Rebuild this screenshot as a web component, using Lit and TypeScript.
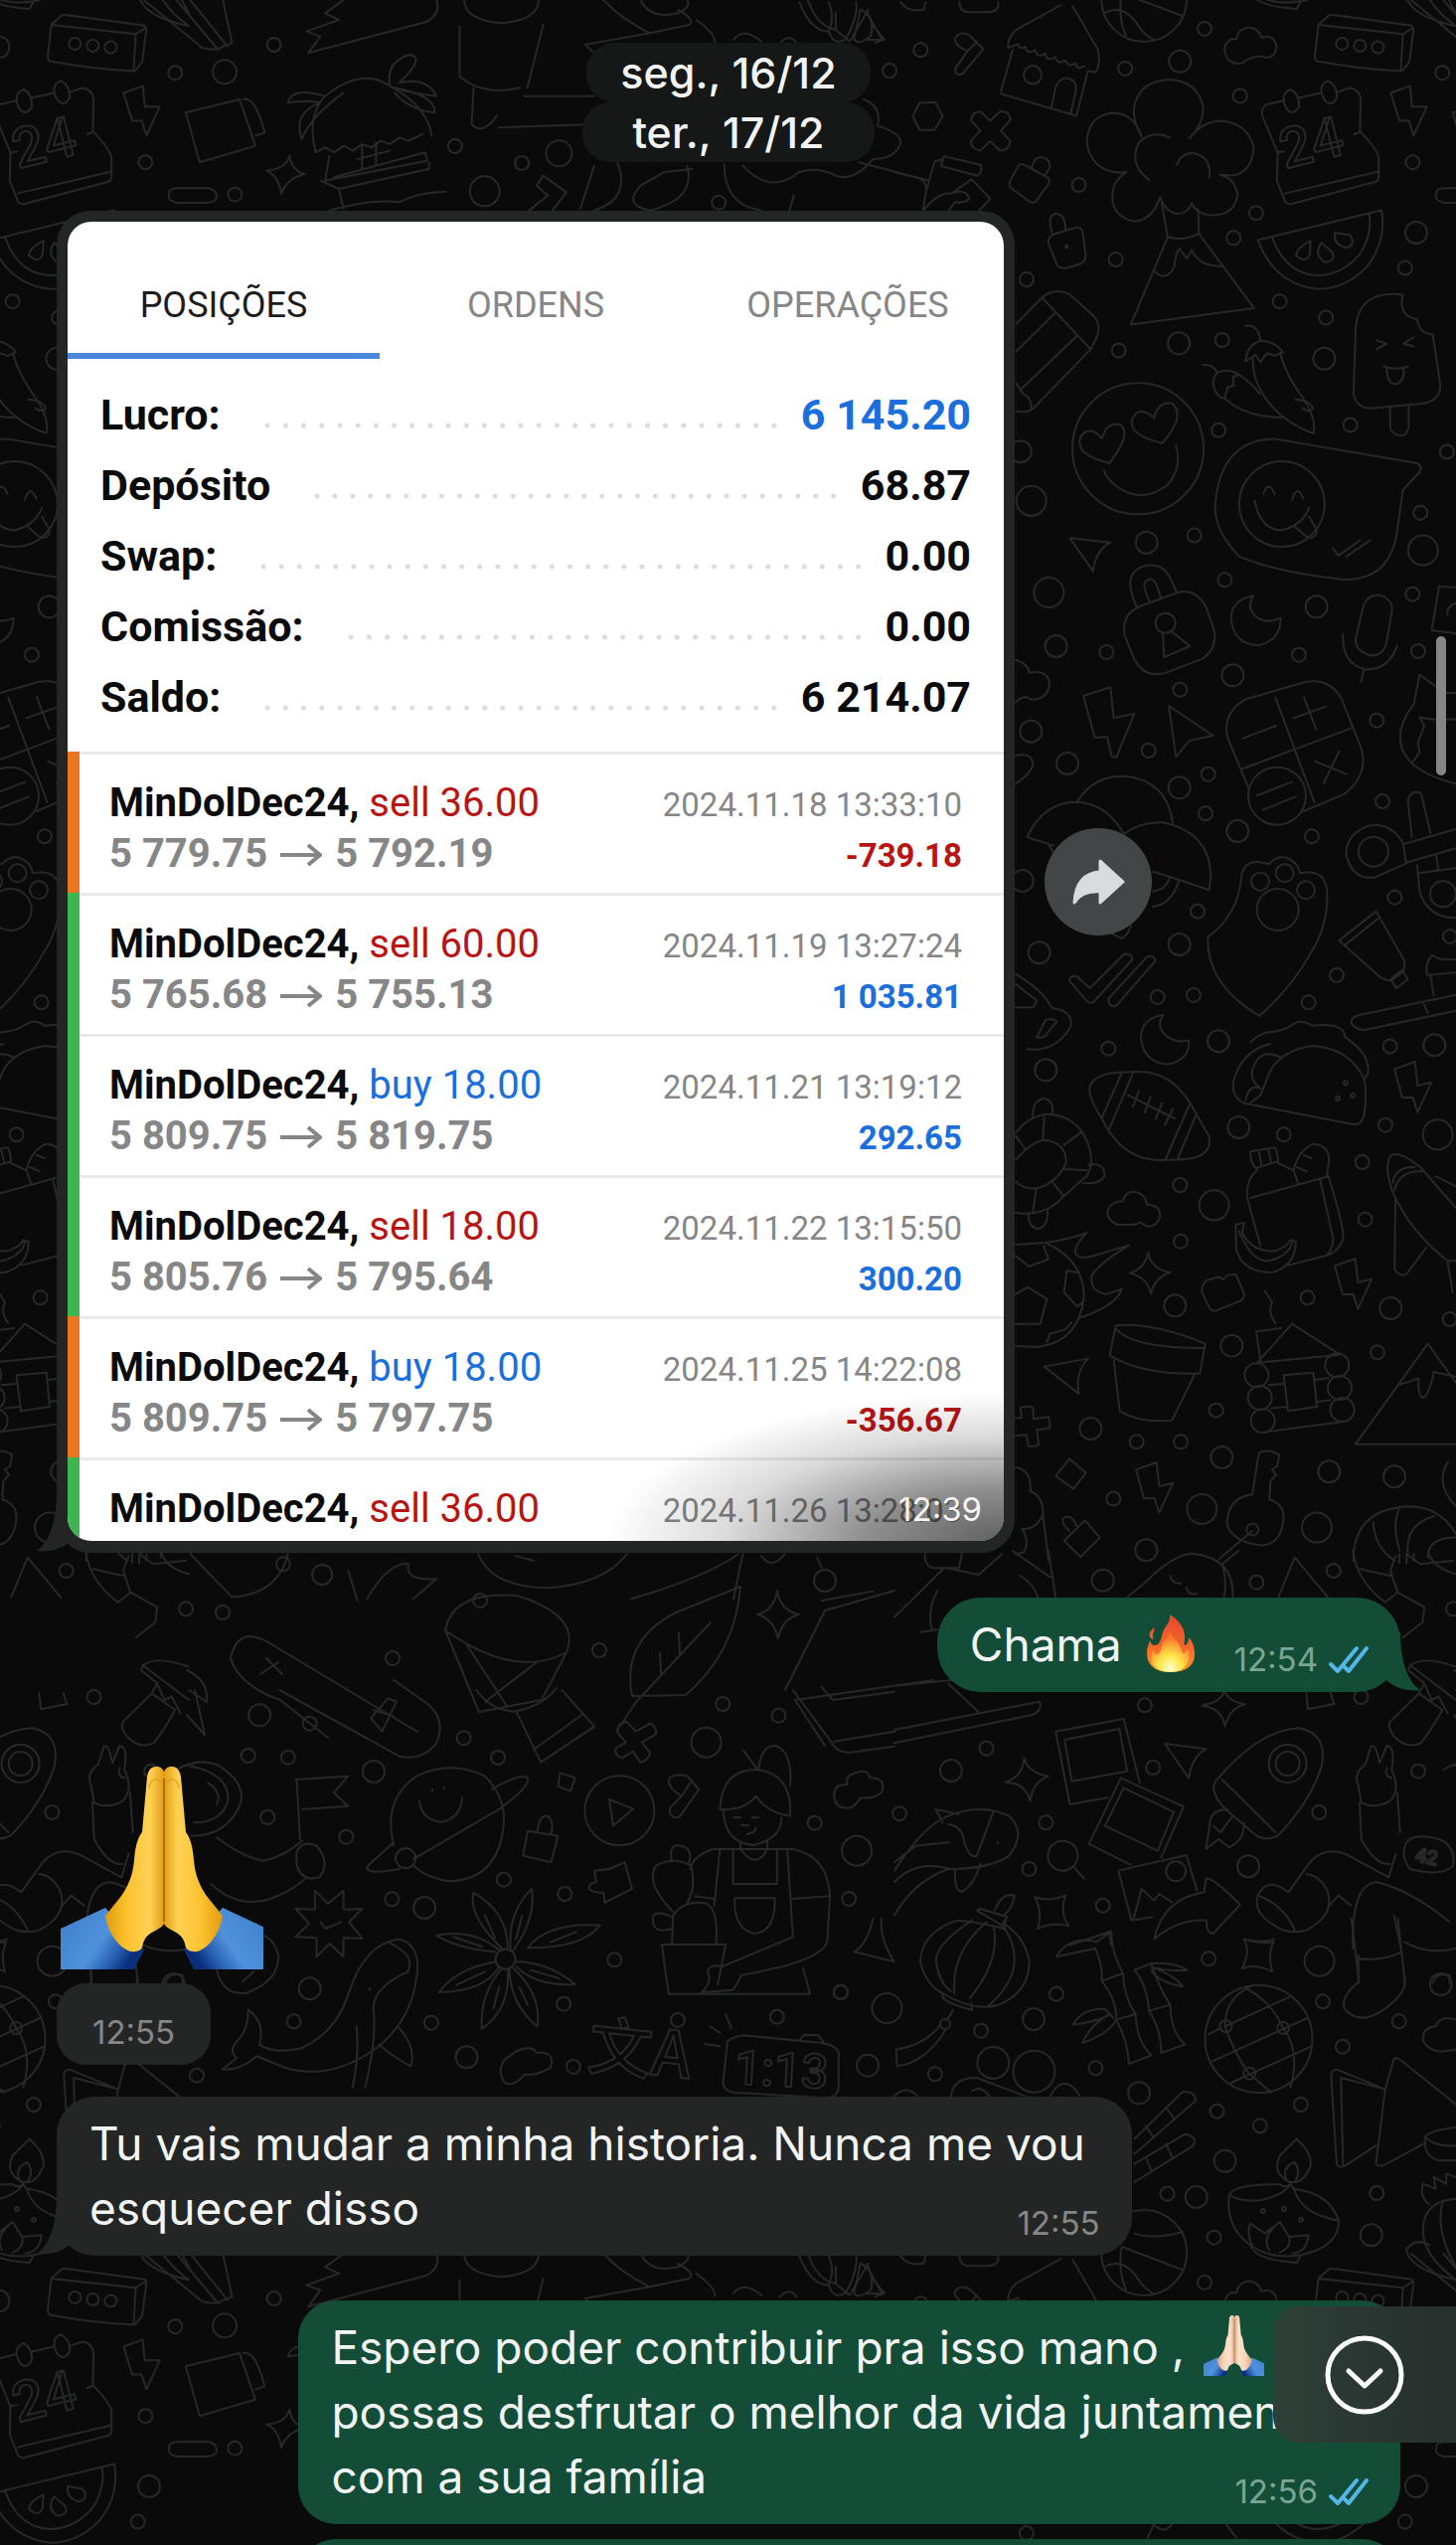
import { LitElement, html, svg, css } from "lit";
import { customElement, property } from "lit/decorators.js";
import { classMap } from "lit/directives/class-map.js";

/* ---------- wallpaper data ---------- */

interface Region {
  x: number;
  y: number;
  sx: number;
  sy: number;
  dots: number[][];
  paths: string[];
}

const TILE_W = 1275;
const TILE_H = 2267;
const BOLT = "M0 22L62 0L70 72L112 62L70 152L56 108L24 108Z";

const regions: Region[] = [
  {
    x: 0, y: 0, sx: 0.9343, sy: 0.3333,
    dots: [[295, 135, 7], [242, 217, 12], [490, 441], [562, 492], [602, 463, 13], [253, 587], [522, 577, 15], [774, 611], [958, 213]],
    paths: [
      "M155 0L218 145Q235 155 240 140L250 130L240 0M190 0L235 150M205 0L245 140",
      "M370 0L350 40L365 60L330 95L345 110L332 160L460 65Q475 40 470 0",
      "M500 0Q500 60 540 70Q580 60 580 0M585 75L568 265M495 80V230Q520 290 560 265M510 265L508 375Q520 410 535 350M565 290L640 290M537 385L640 375M650 0Q670 60 700 100L630 135L640 160M690 0Q700 60 730 40Q745 20 740 0M750 60Q770 100 770 128M730 30Q750 60 742 75L700 100",
      "M200 340L258 300L275 440L215 490ZM262 300Q275 290 285 400L275 410",
      "M340 460Q330 350 350 290Q390 200 420 260Q460 320 465 410M340 460l10 -15l10 15l10 -20l10 15l10 -20l10 10l10 -20l10 10l10 -20l10 10l15 -20M355 470L350 545L460 485L458 460L360 535M345 545L365 570L462 510V490M365 570L370 630M355 635Q400 600 430 610Q450 580 480 578M390 440V510M405 430V500M385 480L420 455M350 290Q315 260 310 310Q330 300 345 310Q315 340 325 420Q335 350 370 280M420 260Q415 190 440 165Q460 170 430 250Q460 230 470 290Q440 280 425 265Q470 290 468 340Q440 330 425 280",
      "M190 568H225Q235 575 233 600Q230 612 220 612H190Q180 605 182 585Q182 570 190 568Z",
      "M312 470Q314 515 328 525Q308 540 303 585Q300 530 287 515Q308 510 312 470Z",
      "M790 120Q800 80 820 125M840 130Q850 100 858 130M870 0Q880 80 900 90V40M900 90L915 125L935 30Q930 25 950 120L932 120M930 300Q950 320 945 380Q970 400 970 430Q965 480 940 480Q920 550 900 530M800 500Q830 590 860 520Q880 500 900 530M925 490L1000 545M640 500L625 630M665 490Q680 600 640 635M740 500Q750 600 700 635Q670 620 690 560L715 520L745 510M780 495Q780 620 820 635M855 590L850 635M585 530L610 580L595 635M585 530L578 560L590 590L570 635",
    ],
  },
  {
    x: 900, y: 0, sx: 0.3603, sy: 0.3571,
    dots: [
      [73, 141], [386, 211, 9], [866, 81], [797, 173, 11], [644, 193], [965, 270], [1530, 205], [1447, 457], [515, 521], [1010, 600],
      [947, 670], [1457, 655, 11], [1426, 755], [618, 731], [369, 787], [1076, 849], [1205, 895], [1200, 1010, 11], [626, 987],
      [794, 967, 11], [915, 958], [905, 1212], [1273, 1197], [1543, 1273], [352, 1272, 11], [382, 1411, 15], [1469, 1444],
      [704, 1528, 11], [837, 1508], [1476, 1550, 15], [680, 1264, 66], [1082, 1420, 43], [1250, 123, 6], [1300, 129, 6], [1350, 133, 6],
    ],
    paths: [
      "M465 14L340 84Q314 108 318 134L345 125q5 18 20 6q5 24 28 10q5 24 28 10q5 24 28 10q5 22 28 9q8 22 28 8q5 22 26 8M497 16L568 140Q578 180 560 204L540 200M330 140L296 264L508 326L540 200M438 303L450 245Q470 205 500 228Q510 240 506 260L492 320",
      "M248 138L190 208Q170 216 170 192L204 144Q170 130 168 110Q180 86 208 98ZM230 118L204 144",
      "M70 290L114 288L135 327L112 366L70 366L51 327Z",
      "M240 314L267 340L295 314Q322 312 324 338L297 368L324 398Q320 424 295 424L267 398L240 424Q212 420 214 396L240 368L214 340Q216 314 240 314Z",
      "M346 466Q352 460 362 464L428 500Q436 508 430 518L396 566Q388 574 378 568L326 530Q318 520 324 508ZM384 470Q392 440 412 443Q436 448 434 472L420 494",
      "M0 485L70 502Q92 515 88 540L80 590M88 540L112 455L130 450M138 440L242 465Q245 485 232 495L130 468ZM80 595Q120 540 160 545Q200 530 210 560Q190 575 170 568L150 595M160 545L215 505L268 560L235 595",
      "M690 385Q660 330 672 290Q690 228 768 224Q845 228 862 300Q864 350 824 390Q860 340 915 340Q990 350 1003 415Q1000 480 950 494L908 492Q950 500 958 548Q950 610 880 606Q840 600 830 573Q815 605 788 602Q755 595 742 555Q720 620 670 624Q610 610 608 555Q608 510 648 484Q600 492 565 462Q535 430 538 390Q545 325 610 318Q670 320 690 385M770 388Q720 365 684 400Q650 460 712 508M788 465Q800 430 834 431Q885 440 880 500M746 570L763 668Q810 680 850 658L848 590M763 668L660 914L1004 868L850 658M728 766Q760 795 782 750Q784 715 796 700L816 728L830 704Q850 750 912 750",
      "M444 660L510 640Q522 640 526 655L534 720Q534 738 518 744L474 756Q458 756 452 742L430 686Q428 668 444 660ZM440 655Q425 610 450 602Q475 600 478 645M478 692h5v5h-5z",
      "M340 912L412 838Q450 808 490 830L556 890Q582 920 560 960L548 984L388 1150Q370 1165 340 1158M412 838L548 984M340 990L448 882M510 946L350 1100M340 1080L360 1110Q384 1120 382 1150",
      "M955 110Q960 80 990 77Q1018 80 1025 106Q1060 95 1067 130Q1065 165 1035 162Q1020 155 1010 160Q985 165 975 176Q950 185 930 165Q910 130 940 110Z",
      "M1184 70L1212 44Q1220 40 1230 43L1445 72Q1452 80 1448 96L1438 175L1418 200Q1300 195 1180 172Q1172 168 1175 150ZM1184 70L1420 96L1448 78M1420 96L1414 196",
      "M1084 284L1040 294Q1022 304 1028 328L1070 430L1068 510L1092 570Q1100 576 1110 574L1345 512Q1355 505 1352 480L1352 440Q1340 410 1300 370L1302 280Q1298 250 1270 248L1236 260M1130 276L1190 262M1090 545L1350 484M1070 430L1088 426M1284 378L1300 372M1106 252Q1130 262 1130 300Q1112 330 1094 305Q1075 265 1106 252ZM1210 228Q1236 238 1236 275Q1218 305 1200 280Q1180 240 1210 228Z",
      "M1386 262L1440 242L1445 300L1487 300L1450 382L1436 340L1410 340Z",
      "M1015 676L1360 592Q1375 680 1320 750Q1260 815 1180 814Q1060 800 1015 676ZM1055 668Q1090 770 1180 776Q1250 775 1300 715Q1335 660 1326 602M1162 678Q1120 700 1122 720Q1150 745 1160 715ZM1192 684Q1170 715 1200 738Q1235 735 1222 710ZM1230 655Q1225 690 1262 698Q1290 690 1272 662Z",
      "M1420 830Q1300 815 1288 920L1282 1110Q1290 1150 1330 1150L1480 1136Q1528 1125 1524 1080L1503 942Q1465 940 1460 900Q1405 890 1420 830ZM1384 1148V1205Q1395 1232 1425 1225L1436 1205V1140M1345 958L1374 968L1346 984M1450 950L1422 968L1450 976M1366 1032Q1400 1045 1434 1032M1375 1038Q1375 1080 1400 1082Q1425 1075 1422 1036",
      "M980 918Q1015 910 1022 960Q985 970 980 1018L1008 1000L1022 1020L1040 995L1062 1002L1085 992Q1060 960 1022 960M1000 1010Q1000 1100 1080 1170Q1130 1210 1170 1220Q1180 1180 1140 1120Q1095 1060 1078 1000M862 1028Q890 1025 902 1050Q885 1070 892 1090Q900 1120 922 1122L930 1092L948 1085L945 1062L962 1055Q930 1035 902 1050M922 1122Q980 1175 1080 1176M962 1055Q1000 1080 1020 1110M1120 1125Q1165 1130 1168 1150Q1160 1165 1140 1150",
      "M600 1305Q500 1280 520 1230Q545 1195 580 1235Q590 1190 630 1196Q665 1220 600 1305ZM748 1248Q650 1225 664 1180Q685 1140 725 1178Q735 1130 775 1136Q815 1170 748 1248ZM786 1255Q805 1320 760 1368Q690 1420 620 1370Q590 1345 585 1325",
      "M1060 1236L1460 1305Q1475 1315 1468 1328L1420 1380L1400 1520Q1370 1640 1249 1632Q1060 1610 963 1568Q890 1490 896 1420Q910 1240 1060 1236ZM1030 1392Q1045 1350 1062 1392M1110 1408Q1125 1360 1142 1405M1006 1410Q1020 1490 1080 1494Q1140 1480 1158 1430M1120 1485L1145 1508Q1175 1525 1180 1495L1158 1455M1225 1545L1240 1565L1300 1522M1262 1568L1328 1522",
      "M490 1516L604 1528Q560 1550 555 1610Z",
    ],
  },
  {
    x: 1000, y: 560, sx: 0.3333, sy: 0.3333,
    dots: [
      [697, 70], [166, 108, 15], [1264, 113], [974, 151, 11], [188, 270, 11], [340, 288], [921, 296], [1281, 285], [721, 358, 11],
      [562, 401], [1156, 494], [112, 527, 11], [467, 585], [222, 624, 11], [647, 656], [560, 697, 11], [1173, 738], [639, 775],
      [736, 828, 11], [960, 844], [86, 978, 11], [615, 1070], [1210, 1028], [1377, 1146], [560, 1170, 11], [137, 1195, 11],
      [1035, 1263], [494, 1329], [603, 1323], [950, 1345], [678, 1462, 11], [1196, 1478], [1330, 1474, 11], [518, 200, 10],
      [855, 722, 29], [1146, 890, 15], [1356, 1018, 13], [804, 980, 9], [878, 955, 9], [942, 1006, 9], [857, 1065, 21],
    ],
    paths: [
      "M440 150L560 106Q610 98 640 150L666 225Q672 280 630 308L520 350Q450 370 420 300L394 235Q385 175 440 150ZM430 150Q400 80 420 50Q450 15 500 30Q530 45 550 105M470 135Q450 90 455 78Q475 55 490 82L505 125M510 228L514 303L592 270L535 224",
      "M784 118Q715 130 716 190Q725 262 795 268Q865 255 866 185Q820 205 790 180Q760 150 784 118Z",
      "M512 1382Q443 1394 444 1454Q453 1526 523 1532Q593 1519 588 1460Q548 1469 518 1444Q488 1414 512 1382Z",
      "M1115 150Q1130 110 1165 116Q1205 128 1202 165L1184 265Q1170 305 1130 296Q1090 280 1092 250ZM1054 235Q1050 320 1118 340Q1190 345 1218 268M1118 340L1108 378",
      "M66 312Q100 320 108 350Q165 340 168 385Q160 435 110 430Q95 415 66 438",
      "M270 420L352 394L362 486L424 474L370 605L356 604L342 544L305 546Z",
      "M528 450L662 540L590 555L550 604Z",
      "M760 430L940 378Q1015 365 1050 430L1110 580Q1130 660 1060 715L935 768M760 430Q690 470 705 545L770 700M850 425L968 742M745 642L1078 518M752 548L852 510M905 487L1004 452M936 424L973 520M970 618L1064 656M1042 588L996 684M795 720L900 680M812 764L912 724",
      "M1395 412L1360 410L1285 356L1268 445Q1215 510 1230 570Q1250 650 1395 685M1285 485Q1340 495 1395 490M1285 485L1300 510L1280 560L1285 590L1265 620",
      "M1395 92L1344 90L1322 222L1395 232M1395 140Q1365 150 1370 175",
      "M250 742Q300 660 390 662Q520 670 540 802M100 846Q150 740 250 740Q340 745 388 830L395 836Q440 800 510 802Q650 830 655 960L650 1006L550 972L480 950M100 846L180 872M168 872L190 910M480 1056Q535 1050 558 980M480 1010Q520 1005 530 970M340 1130L385 1152Q405 1145 414 1110",
      "M1235 865Q1200 800 1130 812Q1060 840 1064 900Q1080 975 1150 968L1245 925ZM1235 868L1395 822M1250 922L1395 880M1262 845L1250 735Q1260 700 1290 715L1318 835M1278 930L1285 1010Q1310 1090 1395 1090M1282 955L1395 940M1335 900L1342 945",
      "M646 1148Q740 1080 748 960Q760 905 830 928Q870 885 915 930L925 955Q1000 940 1006 1010Q1010 1110 960 1190Q900 1300 802 1386Q640 1290 646 1148Z",
      "M1042 1158L1154 1070L1240 1220L1238 1250L1198 1280L1170 1272ZM1062 1170L1160 1092M1198 1275L1232 1248L1250 1275L1215 1302Z",
      "M228 1280Q230 1262 250 1266L290 1302L392 1200Q415 1195 418 1216L300 1345Q290 1350 280 1340ZM345 1335L462 1208Q485 1200 487 1220L370 1355Q348 1362 345 1335Z",
      "M66 1260Q150 1310 175 1362Q240 1370 232 1420Q180 1500 100 1485M66 1290L130 1340L120 1360H66M130 1450L155 1400Q175 1390 190 1402L160 1440Q150 1455 130 1450ZM66 600Q120 590 118 630Q110 655 66 686",
      "M1395 1215Q1340 1220 1325 1202Q1300 1225 1308 1262L1395 1255M1318 1265L1328 1325M1395 1322L1100 1384Q1075 1390 1080 1410Q1095 1430 1120 1428L1395 1370M1298 1350L1310 1378",
    ],
  },
  {
    x: 1000, y: 1050, sx: 0.3333, sy: 0.3333,
    dots: [
      [346, 14], [157, 79, 11], [739, 252, 11], [875, 274], [1182, 245], [1340, 274, 15], [1112, 357], [562, 426], [665, 487, 15],
      [1121, 530], [564, 596], [547, 790, 11], [947, 766], [1198, 798, 11], [1376, 831], [718, 911, 11], [1158, 931], [671, 1106],
      [292, 1161, 11], [431, 1201], [564, 1201], [688, 1248, 11], [1012, 1291, 11], [1209, 1306, 11], [361, 1373], [628, 1404, 15],
      [975, 1460, 15], [460, 1528, 11], [1062, 118, 2], [1038, 165, 2], [1084, 156, 2], [781, 1466, 6],
      [793, 1000, 12], [803, 1068, 12], [812, 1138, 12], [1036, 970, 12], [1044, 1038, 12], [1052, 1104, 12],
    ],
    paths: [
      "M290 130Q300 90 380 86L430 84Q530 80 590 175L650 280Q660 330 600 345Q560 352 520 350Q410 360 345 260L300 180Q285 150 290 130ZM385 90L325 225M420 88L348 258M592 180L518 348M612 210L556 345M405 155L545 225M438 142L420 190M473 160L455 208M508 178L488 226M540 196L516 245",
      "M66 270Q100 220 160 212Q240 215 275 280Q310 350 280 400Q220 450 190 480Q140 520 66 510M66 350Q120 290 155 290Q220 300 218 360Q190 420 130 436Q90 440 66 415M118 225Q115 170 150 165Q185 170 175 215M285 365Q330 355 335 395Q325 425 270 420M105 515Q105 555 135 558Q165 550 162 500M152 222L148 290M262 268L212 305M280 382L215 378M210 458L175 415M118 505L128 440M66 278L95 318",
      "M390 475Q395 445 425 446Q460 455 462 485Q500 485 502 515Q495 555 462 550L440 538L425 546L370 545Q335 525 345 500Q355 475 390 475Z",
      "M66 606L155 600Q230 590 280 570Q250 600 245 625Q250 655 300 640L408 608Q320 660 295 700Q290 750 340 755L386 740Q370 790 262 826M155 600Q270 650 272 760Q260 900 130 915L66 912M66 640L105 672L165 650L150 610M66 755L102 735L160 770L140 845H66M220 685L212 750L252 793L268 780M222 685L250 690M160 900L170 875L215 862L235 840",
      "M466 630Q475 680 532 690Q485 705 474 755Q465 705 410 692Q455 680 466 630Z",
      "M640 715L680 703L692 712L705 698L730 695L756 755Q755 770 745 775L670 806Q655 808 650 795L628 750Q626 730 640 715Z",
      "M775 330Q770 325 790 322L848 313Q858 330 858 355L790 375Q775 360 775 330ZM800 322L808 365M828 318L838 360M795 380Q760 410 765 465L805 610M775 465L1010 400Q1060 560 1054 590Q1040 630 1000 640L890 668M985 410L1025 590Q1020 625 1005 636M858 360L905 382L918 420M905 380Q920 320 965 302Q1010 305 1012 350L1005 400M935 335L958 345M915 372L945 385M730 545L755 540L750 570Q780 630 850 625Q890 610 895 592L912 598Q910 670 840 690Q750 690 732 620ZM740 565Q780 660 830 655Q890 640 900 600",
      "M760 180L1085 243Q1110 245 1118 215Q1130 120 1110 90Q1060 10 960 6Q870 20 835 80Q815 130 805 155L775 178M760 180Q715 165 724 110Q750 20 835 0M775 -5Q800 -30 830 -35Q880 -40 905 -60Q930 -75 960 -55Q1060 -65 1060 -20Q1120 20 1128 60Q1135 90 1118 105M865 40Q800 10 780 80Q775 110 800 130M760 170Q770 120 805 135",
      "M1395 495L1290 375Q1230 325 1200 335Q1175 370 1205 450Q1260 570 1370 655L1395 655M1210 440Q1225 380 1295 385M1205 420Q1210 370 1270 372M1212 470L1210 680Q1230 710 1250 690L1305 615M1335 400L1395 430M1370 658L1385 750",
      "M368 850Q480 840 638 905L622 995Q450 1000 350 940ZM368 860Q420 920 638 918M362 955L380 1108Q440 1145 538 1136L605 1000",
      "M795 962L900 845L1045 938ZM805 955L792 868L868 858M850 843Q825 810 840 780L818 745M875 1000L965 992L975 1095L888 1108ZM830 1030L872 1026M968 1015L1010 1008M838 1100L884 1095M975 1080L1015 1075M815 1172L1055 1140",
      "M1510 1208H1092L1310 905L1480 1140M1220 1030L1282 1010Q1280 1065 1295 1068Q1315 1060 1328 990L1395 1005",
      "M152 974L284 950Q245 990 256 1056Z",
      "M66 1130L84 1128L80 1098Q100 1090 118 1098L120 1132L165 1126Q172 1145 168 1160L130 1165L135 1210Q120 1218 105 1214L98 1180L66 1182",
      "M228 1252L278 1295L240 1343L187 1304Z",
      "M275 1438L320 1490L262 1548L212 1500ZM228 1470Q195 1440 215 1428Q240 1425 250 1455",
      "M780 1360L800 1235Q830 1220 862 1240L855 1275L840 1285L852 1300L835 1320L832 1375Q880 1390 874 1440Q865 1510 810 1514Q720 1505 704 1450Q705 1370 780 1360M780 1470L680 1555",
      "M1085 1560Q1085 1400 1260 1396Q1350 1400 1395 1480M1145 1445Q1150 1520 1210 1560M1225 1400Q1200 1450 1225 1530M1330 1425Q1240 1450 1250 1540M1395 1490Q1310 1490 1310 1550",
      "M66 1278Q115 1285 110 1350Q150 1365 148 1420L165 1560M148 1420Q130 1465 85 1465Q110 1500 90 1535L66 1540M1370 1262Q1330 1330 1395 1395",
    ],
  },
  {
    x: 0, y: 1160, sx: 0.9343, sy: 0.3333,
    dots: [[305, 1240], [347, 1272, 10], [517, 1350]],
    paths: [
      "M150 1210L165 1240L200 1230M205 1210L250 1340Q300 1330 310 1210M375 1260L385 1350M395 1345Q420 1230 440 1240Q435 1290 470 1285L445 1345M515 1210Q530 1310 590 1312Q650 1300 675 1210M555 1215L575 1230M680 1345Q760 1280 795 1210M800 1210L790 1345M820 1215Q830 1260 845 1210M880 1220L885 1250M885 1350L940 1322",
    ],
  },
  {
    x: 0, y: 0, sx: 1, sy: 1,
    dots: [[395, 1668], [603, 1660], [224, 1622], [830, 1590, 11]],
    paths: [
      "M636 1706Q625 1650 680 1622L745 1596Q740 1662 690 1705ZM640 1712L624 1736M640 1712L715 1632M665 1684L664 1662M684 1664L683 1642",
      "M448 1640Q455 1600 520 1605Q585 1625 570 1662Q520 1690 448 1640ZM448 1640L482 1722L545 1710L570 1662M470 1655L510 1716M540 1672L488 1712",
      "M232 1668Q240 1632 275 1655L420 1742M232 1668Q240 1695 282 1710L330 1748M268 1668L284 1684M262 1684L280 1672",
      "M782 1600Q785 1620 804 1624Q787 1628 783 1648Q778 1628 762 1624Q779 1620 782 1600Z",
      "M790 1700L830 1620L900 1600M800 1710L940 1690M800 1710L830 1756",
      "M188 1680Q210 1690 208 1712L190 1700M188 1725L206 1745L196 1700",
    ],
  },
  {
    x: 900, y: 1560, sx: 0.3603, sy: 0.3333,
    dots: [
      [582, 89, 11], [1011, 95], [1226, 60], [1560, 175], [699, 466], [1303, 441], [257, 596], [158, 663, 11], [722, 654],
      [1186, 789], [1463, 665], [423, 820], [14, 793], [376, 960], [988, 952, 11], [582, 1070], [786, 967, 10],
      [1098, 642, 19], [1098, 642, 12], [470, 920, 15],
    ],
    paths: [
      "M0 540L405 455Q415 480 385 495L0 580M235 487L150 400M20 405L160 390M0 200L140 50L235 72L300 10M105 240Q90 180 120 120M350 75Q390 100 400 140M330 0L435 80M430 0L450 140M75 245L120 238M85 10Q85 50 110 52H180L188 10",
      "M650 140L700 95Q780 10 830 8Q950 20 945 140M770 75Q775 100 800 98M815 110Q820 135 845 130M920 140Q930 90 915 40L960 0",
      "M1072 140L1118 20L1210 140",
      "M1280 0Q1290 90 1370 155L1405 125L1480 170L1475 215L1420 262M1385 60L1405 125M1300 55L1385 75M1385 60L1400 15M1410 35v-25M1430 38v-25M1450 30v-20M1490 0Q1500 50 1568 70",
      "M1150 430L1155 478L1228 462L1218 430",
      "M922 420Q930 455 980 463Q935 475 923 530Q915 475 860 467Q915 455 922 420ZM362 625Q372 670 430 680Q385 698 379 755Q365 700 310 698Q360 680 362 625Z",
      "M392 1045Q430 1060 478 1040Q460 1090 487 1132Q440 1120 400 1140Q415 1090 392 1045Z",
      "M1440 345Q1480 315 1568 350M1440 345L1568 450M1440 345L1435 360L1480 400M1385 515L1465 430L1530 480Q1500 540 1470 580Q1430 600 1395 560Q1375 530 1385 515M1465 430L1480 400L1500 450L1520 440L1545 490",
      "M450 545L640 507L685 700M450 545L490 765L595 745M475 570L628 537L650 665L495 695ZM632 685L808 772L745 925M632 685L543 885L660 948M640 715L780 788L735 905L588 830Z",
      "M625 965L815 918L845 1025M625 965L662 1115L720 1105M668 1110L690 1020L725 1055L740 1035L775 1060M725 1172Q750 1050 865 1030L870 988Q890 985 965 1068L890 1155Q870 1155 872 1115Q790 1110 725 1172",
      "M755 582L870 598Q830 620 822 686Z",
      "M905 685Q1020 540 1130 535Q1210 550 1193 650Q1160 760 1070 860Q1030 880 1000 850L925 780Q870 720 905 685ZM915 690L1065 850M930 780Q880 780 880 830L870 900L905 870L935 895Q980 870 975 820M890 830L910 850L945 800",
      "M0 965Q80 830 150 800Q240 760 320 800Q370 850 320 920Q270 960 150 960Q50 1000 0 1100M115 780L180 795M115 780L135 820M150 825Q190 830 195 880Q210 930 230 920L275 790M0 1000Q60 930 155 960M170 960Q165 1030 190 1028Q220 1010 240 945M0 940L60 890L150 880M288 878v5",
      "M502 955L530 990",
      "M230 1085L300 1130L315 1105L240 1080ZM280 1085Q300 1030 335 1040Q330 1080 305 1100M490 1190L600 1150L605 1190",
      "M1015 1040Q1040 980 1100 1030L1160 940Q1200 890 1260 915L1380 985L1400 915M1015 1040Q1000 1090 1060 1130Q1100 1160 1150 1145Q1230 1100 1210 1030Q1190 980 1150 975M1015 1040Q1090 1070 1120 1150M1215 1070L1240 1040L1275 1070M1280 1200Q1275 1000 1350 1000Q1450 1030 1550 1120M1395 1100L1415 1200M1430 880Q1450 850 1520 870Q1568 890 1560 950Q1530 985 1440 960Q1410 920 1430 880",
      "M980 1172Q1020 1185 1060 1172",
    ],
  },
  {
    x: 0, y: 1700, sx: 0.574, sy: 0.3333,
    dots: [
      [455, 76, 11], [543, 101], [813, 145], [435, 198], [505, 203], [655, 246, 11], [873, 204], [1238, 158, 15], [1267, 42], [1365, 77],
      [469, 384], [607, 443], [883, 572], [990, 615], [1488, 630], [1428, 401], [1502, 485, 15], [687, 631], [744, 657, 11], [1077, 814],
      [543, 901, 11], [515, 1000], [756, 1004], [988, 947], [818, 1108, 11], [1188, 996], [1362, 986], [1474, 911], [1521, 1133, 11],
      [1005, 1137], [345, 1163], [711, 508, 10], [1086, 364, 35], [886, 812, 10],
    ],
    paths: [
      "M490 0L700 200Q740 215 765 160Q785 80 740 30L690 -30M650 85L680 25L695 35L670 125ZM655 60L690 80",
      "M835 0Q860 60 900 65Q950 50 975 -5M905 65L948 218L1042 110L985 0M935 180L1020 75",
      "M1098 95L1115 125L1140 100Q1155 120 1148 135L1125 158L1140 190Q1135 215 1122 218L1110 185L1090 205Q1075 195 1080 175L1097 158L1083 130Q1080 100 1098 95Z",
      "M1390 0L1465 175Q1475 190 1490 188L1568 170M1440 -10L1460 30L1568 5M1462 155L1568 125",
      "M160 290Q150 250 172 225L182 170Q190 160 197 220L210 168Q225 170 218 240Q235 300 215 335Q190 360 165 340ZM162 340L165 450Q190 530 215 525M228 310L233 430M210 235Q205 260 218 265",
      "M310 240Q350 200 385 230Q430 280 422 340Q400 440 335 440M330 228Q400 250 400 330Q390 400 340 400M365 280Q390 310 380 345M380 445Q420 500 460 515Q490 510 530 455M370 585Q440 700 535 570M520 270L526 450M518 270L610 260L585 310L610 350L530 360",
      "M520 490Q530 450 555 470Q580 520 560 565Q530 580 520 530ZM240 860L240 885M160 800V885M290 885Q295 850 320 860V885M380 845Q390 920 430 915Q490 880 488 800Q480 750 460 740M425 880L445 850",
      "M690 470Q670 330 730 260Q790 210 850 260Q890 330 882 420Q870 570 790 577Q750 570 725 530M690 460L645 530Q635 560 700 540M862 300Q910 250 925 265Q930 290 875 360L725 510M735 335Q740 395 775 398Q808 385 810 325M758 300v5M778 293v5",
      "M982 250L1008 265L1000 305L978 290ZM925 425L978 440L966 520L917 500ZM942 430Q945 375 960 380Q972 395 966 435",
      "M1068 330L1110 358L1075 410Z",
      "M1175 262Q1190 250 1205 260L1225 300L1190 385Q1170 385 1175 355L1195 320Q1165 290 1175 262ZM1210 280L1195 320",
      "M1262 360Q1265 240 1325 240Q1390 250 1385 380Q1345 370 1325 320Q1305 365 1262 360ZM1268 365Q1270 460 1320 468Q1370 450 1370 385M1330 235Q1335 165 1360 168Q1390 190 1385 290M1303 182L1328 240M1298 460V480Q1325 545 1345 480V455M1250 480H1390Q1450 500 1455 620L1450 760Q1440 820 1300 860L1285 905L1230 912Q1250 880 1240 850Q1245 825 1265 835L1390 745L1380 480M1262 480L1252 650M1285 480V585H1362V480M1288 628H1358Q1360 730 1322 735Q1285 720 1288 628M1250 480Q1215 500 1210 540M1218 622L1250 630M1390 630L1455 622M1160 768H1272L1258 890M1160 768L1172 917H1420L1408 840M1178 765L1180 680Q1200 630 1240 645Q1260 670 1255 765M1180 670Q1130 580 1150 530Q1180 500 1212 530Q1220 600 1205 640M1178 515Q1170 460 1195 470Q1215 480 1208 520M1178 720Q1140 740 1145 680Q1155 665 1178 685M1285 385h12M1318 385h12M1300 408h12M1310 435Q1325 430 1325 415",
      "M1500 250Q1520 235 1525 265Q1555 265 1545 310Q1530 330 1508 325Q1495 370 1470 350Q1455 320 1468 290Q1480 285 1485 285Q1480 260 1500 250Z",
      "M1042 545L1068 540L1095 520L1108 600L1060 642L1058 612Q1025 610 1035 585L1045 580Z",
      "M552 605L575 645L602 605V662L635 660L612 700L635 750L602 748V805L578 765L555 805V748L518 745L542 705L518 660L552 662ZM562 700L570 720L598 700",
      "M880 780Q820 680 830 612Q890 670 890 780M895 780Q890 670 932 600Q940 690 900 785M868 790Q800 780 765 740Q830 720 875 785M870 820Q800 840 770 912Q850 910 875 835M880 840Q840 920 845 1022Q895 960 890 845M900 840Q950 920 942 1015Q895 950 893 845M905 820Q960 820 1008 888Q940 895 905 835M925 778Q960 700 1052 710Q1020 780 925 778M850 680L868 750M915 680L905 750M795 745L845 775M800 890L850 850M865 960L875 895M925 950L910 895M980 870L930 845M965 760L1010 730",
      "M390 1145L415 1110Q400 1090 415 1060Q435 1030 435 965Q465 1000 455 1070Q480 1100 530 1080Q590 1030 610 920Q640 760 700 752Q740 770 730 870Q720 1000 660 1080Q580 1180 500 1140L450 1105Q420 1150 390 1145ZM680 760Q730 800 715 850Q650 900 655 970Q660 1060 640 1200M700 1020Q730 1080 720 1135Q690 1110 665 1070M625 1015Q630 1100 618 1200M648 900v5",
      "M905 1090Q935 1070 940 1095Q975 1090 965 1140Q940 1165 920 1160Q900 1200 885 1185Q870 1150 885 1115Z",
      "M1275 1060Q1290 1040 1310 1043L1440 1065Q1475 1075 1470 1110V1200Q1468 1235 1440 1230L1290 1215Q1265 1210 1268 1180ZM1402 1055L1410 1040L1435 1042L1445 1066M1245 1015L1262 1035M1272 980L1282 1020M1235 1068L1262 1075",
    ],
  },
  {
    x: 800, y: 1930, sx: 0.4241, sy: 0.3333,
    dots: [
      [108, 222], [218, 270, 15], [620, 227], [441, 338], [566, 303, 11], [332, 469], [470, 435, 16], [567, 461, 21],
      [713, 451], [816, 526, 11], [981, 121], [1244, 128, 15], [1252, 250], [1532, 198, 11], [1433, 310], [1299, 386], [1200, 561],
      [1001, 581], [1103, 625], [1020, 731, 11], [883, 830], [952, 840, 11], [1380, 828], [994, 962], [1367, 955, 11],
      [356, 318, 5], [1100, 363, 54], [1022, 325, 6], [1158, 330, 6], [1078, 467, 6], [828, 1008, 43], [1110, 882, 2], [1160, 876, 2], [1200, 908, 2],
    ],
    paths: [
      "M205 0Q200 60 235 130L140 100Q170 80 185 0",
      "M385 5Q300 40 297 130Q310 200 350 225Q420 280 480 262Q560 220 555 120Q540 50 500 20M420 5Q330 80 335 130Q340 190 370 220M455 10Q370 100 378 225M470 20Q490 120 415 240M495 25Q560 150 460 262M350 225Q340 250 420 275L418 255M385 5Q440 10 495 30L500 5M375 275Q370 290 360 305M345 320Q310 380 240 395L242 445Q310 435 360 330",
      "M620 115Q650 50 715 70L750 38Q750 100 778 165L728 188Q730 140 712 90ZM728 188Q765 250 762 305L808 288Q780 240 778 165M762 305Q790 370 792 438L845 412Q810 370 808 288M805 155L845 135Q860 200 890 260L840 278Q835 200 805 155ZM840 278Q870 340 868 405L925 380Q890 340 890 260M845 135Q900 130 930 155Q880 160 845 145Q900 170 920 205Q860 190 845 155M660 320Q680 270 735 272L755 300M660 320Q720 310 745 290Q700 320 682 375Q740 350 760 310",
      "M1065 62Q1100 78 1135 70Q1120 110 1132 160Q1095 135 1060 150Q1082 100 1065 62Z",
      "M1320 0L1338 190Q1290 240 1305 275Q1340 320 1390 280Q1460 220 1445 170L1430 0M1335 120Q1390 130 1440 100M1445 70Q1500 110 1568 90",
      "M1020 325Q1020 240 1080 205M1020 325L1175 235M980 350L1010 330M1020 325Q1040 400 1075 465M990 430L1215 300M1158 330Q1130 250 1070 210M1158 330Q1200 400 1175 510M1035 495L1225 385M1078 468L1130 525",
      "M1400 515L1285 455Q1270 455 1272 480L1285 740Q1290 755 1305 745L1378 685M1295 480L1300 745M1400 515L1420 425Q1425 415 1440 430L1568 560M1400 515L1378 740Q1385 750 1400 742L1490 680M1295 480L1400 515",
      "M1568 305Q1530 290 1520 325Q1485 330 1490 370Q1510 405 1540 400L1568 395",
      "M1568 630Q1500 640 1495 660Q1490 720 1530 730H1568M1495 660Q1520 690 1568 685",
      "M1175 795Q1130 770 1150 715L1190 665Q1230 710 1222 750Q1205 800 1180 795ZM1165 785Q1155 750 1185 735Q1200 760 1188 790M1030 835Q1040 800 1150 802Q1165 815 1175 800M1030 835Q1090 870 1150 830Q1170 815 1175 800L1185 820Q1200 890 1290 912Q1270 830 1185 815M1030 835Q1020 930 1080 985Q1090 1030 1190 1038L1200 1015Q1290 990 1290 912M1080 985Q1130 1030 1200 1015M1085 985Q1070 950 1080 920L1115 950L1150 915L1172 960L1218 955Q1215 1005 1180 1010M1150 915Q1105 960 1125 1000M1172 960Q1180 990 1150 1008",
      "M805 665L920 522Q950 520 950 550L805 710M880 570L900 605M832 625L850 660M805 740L925 650Q955 655 945 685L805 795M880 680L895 720M832 720L845 760",
      "M775 990L920 1060M805 950Q850 970 920 945M775 990Q765 1060 785 1120M735 1050Q780 1020 815 1090Q830 1120 850 1130",
      "M1568 780L1545 770V800L1515 780L1520 815L1490 800Q1480 840 1505 862M1568 1090Q1470 1000 1495 900Q1510 850 1568 845M1568 1050Q1520 950 1535 860M1450 1000Q1470 960 1505 985M1450 1000Q1460 1060 1568 1090",
      "M10 1018Q40 1110 80 1105Q95 1060 80 1018M145 1018Q150 1060 120 1130Q90 1150 80 1105M155 1040Q190 1060 180 1120Q150 1150 140 1130L155 1040M180 1080L212 1130L190 1140M250 1018Q270 1050 305 1040L310 1018M390 1018Q390 1050 420 1048H460Q485 1045 482 1018",
      "M370 535Q375 480 430 480L545 535M420 520Q440 500 460 535M235 535Q265 500 290 535M605 535Q640 460 675 535",
    ],
  },
];

const bolts = [[1403, 1068], [1343, 1266], [1143, 1471]];

@customElement("chat-wallpaper")
export class ChatWallpaper extends LitElement {
  static styles = css`
    :host { display: block; }
    .art { display: block; width: 100%; height: 100%; }
    .tile { fill: none; stroke: #272828; stroke-width: 2; stroke-linecap: round; stroke-linejoin: round; }
    .line { vector-effect: non-scaling-stroke; }
    .num { font-family: Roboto, "Liberation Sans", sans-serif; font-size: 56px; font-weight: 500; }
    .han { font-family: "Noto Sans CJK SC", sans-serif; font-size: 64px; font-weight: 500; }
    .clock { font-size: 48px; }
    .tiny { font-size: 20px; }
  `;

  render() {
    const copies = [-1, 0, 1].flatMap((cx) => [-1, 0, 1].map((cy) => [cx * TILE_W, cy * TILE_H]));
    return html`
      <svg class="art" aria-hidden="true">
        <defs>
          <g id="tile" class="tile">
            ${regions.map(
              (r) => svg`
                <g transform="translate(${r.x} ${r.y}) scale(${r.sx} ${r.sy})">
                  ${r.paths.map((d) => svg`<path class="line" d=${d}></path>`)}
                </g>
                ${r.dots.map(([x, y, rad = 7]) => svg`<circle cx=${r.x + x * r.sx} cy=${r.y + y * r.sy} r=${rad}></circle>`)}
              `
            )}
            ${bolts.map(([x, y]) => svg`<path class="line" d=${BOLT} transform="translate(${x} ${y}) scale(.3333)"></path>`)}
            <text class="num" transform="translate(1293 170) rotate(-14)">24</text>
            <text class="num clock" transform="translate(738 2096) rotate(3)">1:13</text>
            <text class="num tiny" transform="translate(1423 1872) rotate(12)">42</text>
            <text class="han" transform="translate(590 2080) rotate(6)">文A</text>
          </g>
        </defs>
        ${copies.map(([x, y]) => svg`<use href="#tile" x=${x} y=${y}></use>`)}
      </svg>
    `;
  }
}

/* ---------- emoji ---------- */

const fire = html`
  <svg class="emoji fire" viewBox="0 0 48 60" role="img" aria-label="fogo">
    <defs>
      <linearGradient id="fo" x1="0" y1="0" x2="0" y2="1">
        <stop offset="0" stop-color="#e8452c"></stop>
        <stop offset=".55" stop-color="#f4672a"></stop>
        <stop offset="1" stop-color="#fb9a28"></stop>
      </linearGradient>
      <radialGradient id="fi" cx=".5" cy=".9" r=".75">
        <stop offset="0" stop-color="#fffbd0"></stop>
        <stop offset=".4" stop-color="#ffe84a"></stop>
        <stop offset="1" stop-color="#f9762a"></stop>
      </radialGradient>
    </defs>
    <path fill="url(#fo)" d="M23 1C30 5 38 13 38 24c0 5-1 7 0 8 3-1 4-4 4-8 4 4 6 10 6 17 0 11-8 18-24 18S0 52 0 40c0-6 2-9 3-13 1 3 2 5 5 5 5 0 6-6 8-13 2-6 8-10 7-18ZM7 14c1 4-1 5-1 8 0 2 1 3 0 4-3-1-4-4-3-7 1-2 3-3 4-5Z"></path>
    <path fill="url(#fi)" d="M23 18c1 6 9 9 11 17 1 3 2 5 3 5 2 0 3-2 4-4 2 4 2 8 0 13-2 6-9 10-17 10S7 56 5 49c-1-4-1-8 1-12 1 3 2 4 4 4 4 0 4-6 6-11 2-4 7-6 7-12Z"></path>
  </svg>
`;

const pray = (label: string, key: string, light: string, mid: string, dark: string) => html`
  <svg class="emoji pray" viewBox="0 0 204 204" role="img" aria-label=${label}>
    <defs>
      <linearGradient id="${key}s" x1="0" y1="0" x2="1" y2=".5">
        <stop offset="0" stop-color="#3f7fca"></stop>
        <stop offset=".6" stop-color="#4f91dc"></stop>
        <stop offset=".82" stop-color="#2a62b4"></stop>
        <stop offset="1" stop-color="#0a2f7c"></stop>
      </linearGradient>
      <linearGradient id="${key}h" x1="0" y1="0" x2="1" y2="0">
        <stop offset="0" stop-color=${dark}></stop>
        <stop offset=".35" stop-color=${mid}></stop>
        <stop offset=".75" stop-color=${light}></stop>
        <stop offset="1" stop-color=${dark}></stop>
      </linearGradient>
    </defs>
    <g id="${key}half">
      <path fill="url(#${key}s)" d="M0 163 45 142 84 184 74 204H0Z"></path>
      <path fill="url(#${key}h)" d="M105 8C103 1 100 0 96 0 91 0 88 4 87 10L82 66C76 74 75 84 74 94 73 108 68 122 58 134L45 150C47 164 55 178 66 184 72 188 80 186 82 182 84 170 90 168 97 164 103 161 105 158 105 152Z"></path>
      <path fill="none" stroke=${dark} stroke-width="2" opacity=".6" d="M89 22c0-12 14-12 15 0"></path>
    </g>
    <use href="#${key}half" transform="translate(208 0) scale(-1 1)"></use>
    <path stroke="#9b5a10" stroke-width="2" opacity=".7" d="M104 12V156"></path>
  </svg>
`;

const ticks = html`
  <svg class="ticks" viewBox="0 0 40 28" aria-label="lida" role="img">
    <path d="M2 19 9 26 28 3M16 22 20 26 38 3"></path>
  </svg>
`;

const tail = html`
  <svg class="tail" viewBox="0 0 40 60" aria-hidden="true"><path d="M0 0H20C20 26 26 48 40 58 28 60 14 56 6 48L0 50Z"></path></svg>
`;

/* ---------- trading card ---------- */

interface Position {
  side: "sell" | "buy";
  volume: string;
  from: string;
  to: string;
  date: string;
  profit: string;
}

const tabs = ["POSIÇÕES", "ORDENS", "OPERAÇÕES"];

const summary: [string, string][] = [
  ["Lucro:", "6 145.20"],
  ["Depósito", "68.87"],
  ["Swap:", "0.00"],
  ["Comissão:", "0.00"],
  ["Saldo:", "6 214.07"],
];

const positions: Position[] = [
  { side: "sell", volume: "36.00", from: "5 779.75", to: "5 792.19", date: "2024.11.18 13:33:10", profit: "-739.18" },
  { side: "sell", volume: "60.00", from: "5 765.68", to: "5 755.13", date: "2024.11.19 13:27:24", profit: "1 035.81" },
  { side: "buy", volume: "18.00", from: "5 809.75", to: "5 819.75", date: "2024.11.21 13:19:12", profit: "292.65" },
  { side: "sell", volume: "18.00", from: "5 805.76", to: "5 795.64", date: "2024.11.22 13:15:50", profit: "300.20" },
  { side: "buy", volume: "18.00", from: "5 809.75", to: "5 797.75", date: "2024.11.25 14:22:08", profit: "-356.67" },
  { side: "sell", volume: "36.00", from: "", to: "", date: "2024.11.26 13:28:03", profit: "" },
];

@customElement("position-card")
export class PositionCard extends LitElement {
  @property() time = "";

  static styles = css`
    :host {
      display: block;
      position: relative;
      aspect-ratio: 942 / 1327;
      overflow: hidden;
      border-radius: 24px;
      background: #fff;
      color: #0b0b0b;
      font-family: Roboto, "Liberation Sans", sans-serif;
    }
    .tabs { display: grid; grid-template-columns: repeat(3, 1fr); }
    .tab {
      height: 138px;
      padding: 36px 0 0;
      border: 0;
      border-bottom: 6px solid transparent;
      background: none;
      color: #868686;
      font: inherit;
      font-size: 36px;
    }
    .tab.on { color: #1c1c1c; border-color: #4a86d9; }
    .summary { margin: 0; padding: 21px 33px 19px; font-size: 43px; font-weight: 700; line-height: 71px; }
    .sum { display: flex; align-items: baseline; }
    .sum dd { margin: 0; }
    .dots {
      flex: 1;
      height: 8px;
      margin: 0 18px 0 38px;
      background: radial-gradient(circle, #dcdcdc 2px, transparent 3px) 0 0 / 18px 8px round;
    }
    .blue { color: #1a6fdc; }
    .red { color: #b81414; }
    .list { margin: 0; padding: 0; list-style: none; }
    .row {
      box-sizing: border-box;
      height: 142px;
      display: flex;
      justify-content: space-between;
      align-items: baseline;
      padding: 26px 42px 0 30px;
      border-left: 12px solid #3eb650;
      background: linear-gradient(#e9e9e9, #e9e9e9) 0 0 / 100% 3px no-repeat;
      line-height: 51px;
      font-size: 40px;
      white-space: nowrap;
    }
    .row.loss { border-left-color: #ec751f; }
    .right { text-align: right; font-size: 33px; }
    .date { color: #868686; }
    .price { color: #868686; font-weight: 700; }
    .arrow { width: 42px; height: 24px; margin: 0 13px; fill: none; stroke: #868686; stroke-width: 4; }
    .shade {
      position: absolute;
      inset: auto 0 0 auto;
      width: 400px;
      height: 150px;
      background: radial-gradient(ellipse 100% 100% at 100% 100%, rgba(0, 0, 0, .62), rgba(0, 0, 0, .44) 35%, rgba(0, 0, 0, .14) 70%, transparent);
    }
    .time {
      position: absolute;
      right: 22px;
      bottom: 14px;
      color: #f4f4f4;
      font: 400 33px/36px Inter, sans-serif;
    }
  `;

  render() {
    return html`
      <div class="tabs" role="tablist">
        ${tabs.map(
          (t, i) => html`<button class=${classMap({ tab: true, on: i === 0 })} role="tab" aria-selected=${i === 0}>${t}</button>`
        )}
      </div>
      <dl class="summary">
        ${summary.map(
          ([k, v], i) => html`
            <div class="sum"><dt>${k}</dt><span class="dots"></span><dd class=${classMap({ blue: i === 0 })}>${v}</dd></div>
          `
        )}
      </dl>
      <ul class="list">
        ${positions.map((p) => {
          const loss = p.profit.startsWith("-");
          return html`
            <li class=${classMap({ row: true, loss })}>
              <div>
                <div><b>MinDolDec24,</b> <span class=${p.side === "buy" ? "blue" : "red"}>${p.side} ${p.volume}</span></div>
                ${p.from
                  ? html`<div class="price">${p.from}<svg class="arrow" viewBox="0 0 42 24" role="img" aria-label="para"><path d="M0 12H40M28 2 40 12 28 22"></path></svg>${p.to}</div>`
                  : ""}
              </div>
              <div class="right">
                <div class="date">${p.date}</div>
                <b class=${loss ? "red" : "blue"}>${p.profit}</b>
              </div>
            </li>
          `;
        })}
      </ul>
      <div class="shade"></div>
      <time class="time">${this.time}</time>
    `;
  }
}

/* ---------- chat ---------- */

@customElement("app-root")
export class AppRoot extends LitElement {
  static styles = css`
    :host { display: block; }
    .chat {
      position: relative;
      height: 100vh;
      overflow: hidden;
      background: #0a0a0a;
      font-family: Inter, "Liberation Sans", sans-serif;
      color: #f2f4f3;
    }
    .wall { position: absolute; inset: 0; }
    .thread {
      position: relative;
      display: flex;
      flex-direction: column;
      align-items: flex-start;
      padding: 43px 56px 0 57px;
    }
    .days { align-self: stretch; display: flex; flex-direction: column; align-items: center; margin-bottom: 49px; }
    .day {
      padding: 0 34px;
      border-radius: 28px;
      background: #161717;
      font-size: 43px;
      font-weight: 500;
      line-height: 60px;
    }
    .day.wide { padding: 0 50px; }
    .bubble {
      position: relative;
      box-sizing: border-box;
      max-width: 80%;
      padding: 15px 32px 15px 33px;
      border-radius: 38px;
      background: #242626;
      display: grid;
      font-size: 46px;
      line-height: 65px;
    }
    .bubble.out { align-self: flex-end; max-width: 82%; background: #144d37; }
    .bubble.short { grid-template-columns: auto auto; column-gap: 40px; border-radius: 44px; }
    .bubble.photo { display: block; width: 964px; max-width: 100%; padding: 11px 11px 12px; border-radius: 34px; }
    .bubble.next { width: 82%; min-height: 95px; }
    .photo-line { align-self: stretch; display: flex; align-items: center; gap: 30px; margin-bottom: 45px; }
    .text { grid-area: 1 / 1; margin: 0; }
    .meta {
      grid-area: 1 / 1;
      align-self: end;
      justify-self: end;
      display: flex;
      align-items: center;
      gap: 11px;
      color: #858787;
      font-size: 33px;
      line-height: 36px;
    }
    .short .meta { grid-area: 1 / 2; }
    .out .meta { color: #7aa593; }
    .ticks { width: 40px; height: 28px; fill: none; stroke: #53b6e6; stroke-width: 4; stroke-linecap: round; stroke-linejoin: round; }
    .tail { position: absolute; bottom: 0; right: -20px; width: 40px; height: 60px; fill: #144d37; }
    .bubble:not(.out) .tail { right: auto; left: -20px; transform: scaleX(-1); fill: #242626; }
    .fire { width: 48px; height: 60px; margin-left: 12px; vertical-align: -12px; }
    .pray { display: inline-block; width: 61px; height: 61px; margin-left: 6px; vertical-align: -12px; }
    .big { margin: 75px 0 14px 4px; line-height: 0; }
    .big .pray { width: 204px; height: 204px; margin: 0; vertical-align: top; }
    .stamp {
      padding: 31px 36px 15px;
      border-radius: 30px;
      background: #242626;
      color: #858787;
      font-size: 33px;
      line-height: 36px;
    }
    .gap-m { margin-top: 32px; }
    .gap-l { margin-top: 45px; }
    .gap-s { margin-top: 15px; }
    .forward {
      flex: none;
      width: 108px;
      height: 108px;
      padding: 0;
      border: 0;
      border-radius: 50%;
      background: #424646;
      display: grid;
      place-items: center;
    }
    .forward svg { width: 54px; height: 46px; fill: #d9dbde; stroke: #d9dbde; stroke-width: 3; stroke-linejoin: round; }
    .jump {
      position: absolute;
      right: 0;
      bottom: 103px;
      width: 184px;
      height: 137px;
      padding: 0;
      border: 0;
      border-radius: 26px 0 0 26px;
      background: linear-gradient(90deg, #2d4138, #2b3833 40%, #26302d);
      display: grid;
      place-items: center;
    }
    .jump svg { width: 80px; height: 80px; fill: none; stroke: #fafcfb; stroke-width: 5; stroke-linecap: round; stroke-linejoin: round; }
    .thumb { position: absolute; right: 10px; top: 25%; width: 10px; height: 140px; border-radius: 5px; background: #868686; }
  `;

  render() {
    return html`
      <main class="chat">
        <chat-wallpaper class="wall"></chat-wallpaper>
        <section class="thread">
          <div class="days">
            <time class="day">seg., 16/12</time>
            <time class="day wide">ter., 17/12</time>
          </div>

          <div class="photo-line">
            <article class="bubble photo">
              ${tail}
              <position-card time="12:39"></position-card>
            </article>
            <button class="forward" aria-label="Encaminhar">
              <svg viewBox="0 0 54 46" aria-hidden="true"><path d="M29 2 52 23 29 44V33C16 32 8 36 3 44 4 24 13 14 29 13Z"></path></svg>
            </button>
          </div>

          <article class="bubble out short">
            ${tail}
            <p class="text">Chama ${fire}</p>
            <span class="meta"><time>12:54</time>${ticks}</span>
          </article>

          <div class="big">${pray("mãos juntas", "a", "#ffd254", "#fcc22e", "#e09a10")}</div>
          <time class="stamp">12:55</time>

          <article class="bubble gap-m">
            ${tail}
            <p class="text">Tu vais mudar a minha historia. Nunca me vou esquecer disso</p>
            <span class="meta"><time>12:55</time></span>
          </article>

          <article class="bubble out gap-l">
            <p class="text">Espero poder contribuir pra isso mano , ${pray("mãos juntas", "b", "#fbe3cd", "#f5d3b8", "#d7a384")} possas desfrutar o melhor da vida juntamente com a sua família</p>
            <span class="meta"><time>12:56</time>${ticks}</span>
          </article>

          <article class="bubble out gap-s next"></article>
        </section>

        <button class="jump" aria-label="Ir para o fim">
          <svg viewBox="0 0 80 80" aria-hidden="true"><circle cx="40" cy="40" r="37"></circle><path d="M24 36 40 51 56 36"></path></svg>
        </button>
        <div class="thumb"></div>
      </main>
    `;
  }
}
